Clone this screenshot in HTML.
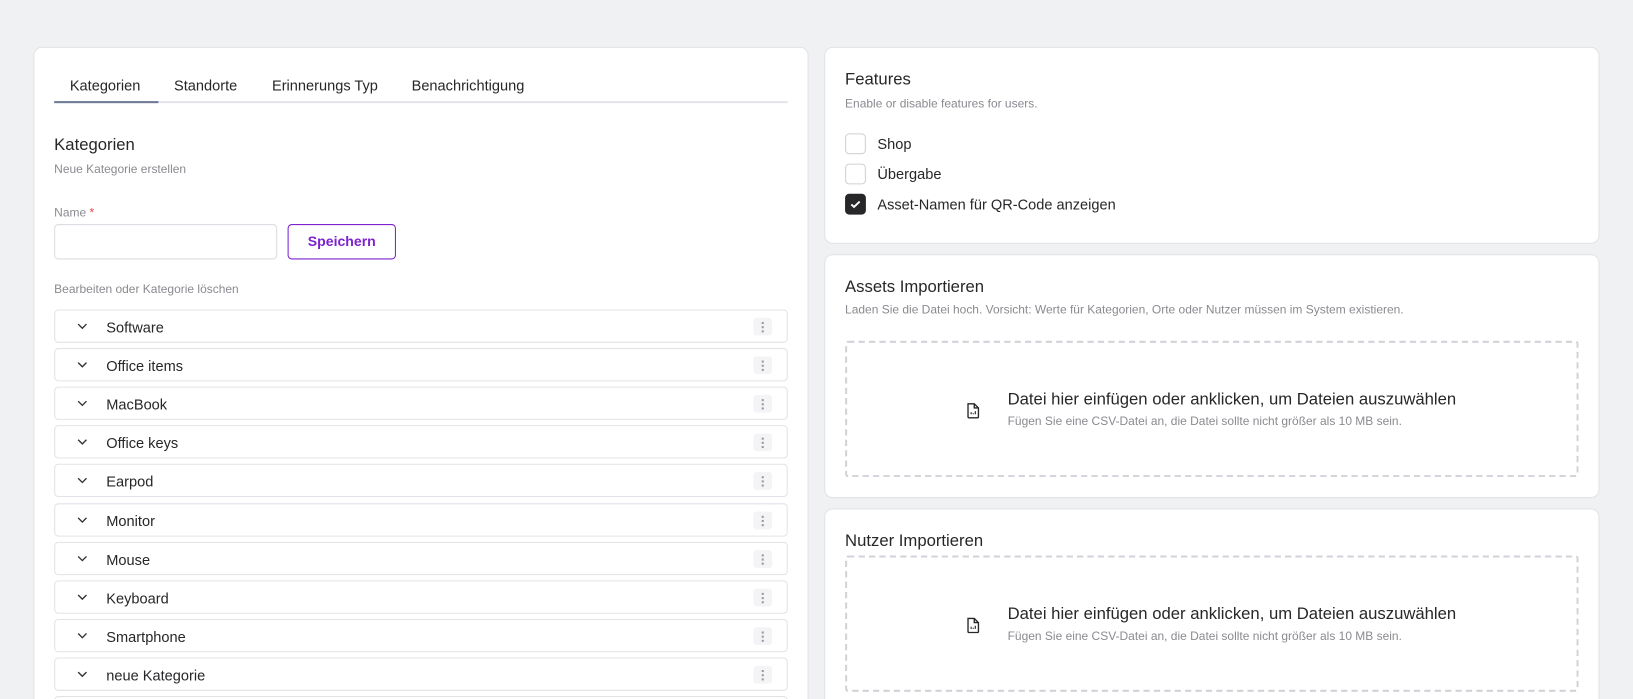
<!DOCTYPE html>
<html><head><meta charset="utf-8"><style>
*{box-sizing:border-box;margin:0;padding:0}
html,body{width:1633px;height:699px;overflow:hidden;background:#f0f1f3}
body{font-family:"Liberation Sans",Arial,sans-serif;color:#27272a;position:relative}
#w{position:absolute;left:0;top:0;width:1633px;height:760px;transform:scale(1.042);transform-origin:0 0}
.card{position:absolute;background:#fff;border:1px solid #e2e3e7;border-radius:8px}
.a{position:absolute;white-space:nowrap}
.tab{position:absolute;top:74px;font-size:14px;color:#27272a}
.row{position:absolute;left:52px;width:704px;height:32px;border:1px solid #e2e3e7;border-radius:4px;background:#fff}
.row .t{position:absolute;left:49px;top:8px;font-size:14px;color:#27272a}
.row svg.c{position:absolute;left:20px;top:11px}
.row .k{position:absolute;right:14px;top:7px;width:18px;height:17px;background:#f4f4f6;border-radius:3px}
.row .k i{position:absolute;left:8px;width:2px;height:2px;background:#9a9aa0}
.cb{position:absolute;left:811px;width:20px;height:20px;border:1px solid #cfd1d6;border-radius:4px;background:#fff}
.lbl{position:absolute;left:842px;font-size:14px;color:#27272a}
.drop{position:absolute;left:811px;width:704px;height:131px;border:2px dashed #d1d3d8;border-radius:3px}
.dt{position:absolute;left:154px;font-size:16px;color:#27272a;white-space:nowrap}
.ds{position:absolute;left:154px;font-size:11.5px;color:#8a8a90;white-space:nowrap}
</style></head><body><div id="w">
<div class="card" style="left:32px;top:45px;width:744px;height:700px"></div>
<div class="tab" style="left:67px">Kategorien</div>
<div class="tab" style="left:167px">Standorte</div>
<div class="tab" style="left:261px">Erinnerungs Typ</div>
<div class="tab" style="left:395px">Benachrichtigung</div>
<div class="a" style="left:52px;top:97px;width:704px;height:2px;background:#e3e5ea"></div>
<div class="a" style="left:52px;top:97px;width:100px;height:2px;background:#6e7b99"></div>
<div class="a" style="left:52px;top:131px;font-size:16px">Kategorien</div>
<div class="a" style="left:52px;top:157px;font-size:11.5px;color:#8a8a90">Neue Kategorie erstellen</div>
<div class="a" style="left:52px;top:199px;font-size:11.5px;color:#8a8a90">Name <span style="color:#ef4444">*</span></div>
<div class="a" style="left:52px;top:215px;width:214px;height:34px;border:1px solid #dcdde2;border-radius:4px"></div>
<div class="a" style="left:276px;top:215px;width:104px;height:34px;border:1px solid #7e22ce;border-radius:4px;color:#7e22ce;font-weight:bold;font-size:13.5px;text-align:center;line-height:32px">Speichern</div>
<div class="a" style="left:52px;top:272px;font-size:11.5px;color:#8a8a90">Bearbeiten oder Kategorie löschen</div>

<div id="rows"></div>
<script>
var n=["Software","Office items","MacBook","Office keys","Earpod","Monitor","Mouse","Keyboard","Smartphone","neue Kategorie",""];
var h="";
for(var i=0;i<n.length;i++){var y=297+i*37.1;
h+='<div class="row" style="top:'+y.toFixed(1)+'px"><svg class="c" width="12" height="8" viewBox="0 0 12 8"><path d="M2 2l4 4 4-4" fill="none" stroke="#333" stroke-width="1.3"/></svg><span class="t">'+n[i]+'</span><span class="k"><i style="top:4px"></i><i style="top:8px"></i><i style="top:12px"></i></span></div>';}
document.getElementById("rows").innerHTML=h;
</script>

<div class="card" style="left:791px;top:45px;width:744px;height:189px"></div>
<div class="a" style="left:811px;top:68px;font-size:16px">Features</div>
<div class="a" style="left:811px;top:94px;font-size:11.5px;color:#8a8a90">Enable or disable features for users.</div>
<div class="cb" style="top:128px"></div><div class="lbl" style="top:130px">Shop</div>
<div class="cb" style="top:157px"></div><div class="lbl" style="top:159px">Übergabe</div>
<div class="cb" style="top:186px;background:#27272a;border-color:#27272a"><svg width="18" height="18" viewBox="0 0 18 18" style="position:absolute;left:0;top:0"><path d="M5 9.2l2.6 2.4L13 6.4" fill="none" stroke="#fff" stroke-width="1.8"/></svg></div><div class="lbl" style="top:188px">Asset-Namen für QR-Code anzeigen</div>

<div class="card" style="left:791px;top:244px;width:744px;height:234px"></div>
<div class="a" style="left:811px;top:267px;font-size:16px">Assets Importieren</div>
<div class="a" style="left:811px;top:292px;font-size:11.5px;color:#8a8a90">Laden Sie die Datei hoch. Vorsicht: Werte für Kategorien, Orte oder Nutzer müssen im System existieren.</div>
<div class="drop" style="top:327px">
<svg width="14" height="16" viewBox="0 0 14 16" style="position:absolute;left:114px;top:57px"><path d="M2 1.5h6l4 4v8.5a1 1 0 0 1-1 1H3a1 1 0 0 1-1-1z M8 1.5v4h4" fill="none" stroke="#27272a" stroke-width="1.3"/><path d="M5 11.5v-2M7 11.5v-1M9 11.5v-3" stroke="#27272a" stroke-width="1.1"/></svg>
<div class="dt" style="top:46px">Datei hier einfügen oder anklicken, um Dateien auszuwählen</div>
<div class="ds" style="top:70px">Fügen Sie eine CSV-Datei an, die Datei sollte nicht größer als 10 MB sein.</div>
</div>

<div class="card" style="left:791px;top:488px;width:744px;height:260px"></div>
<div class="a" style="left:811px;top:511px;font-size:16px">Nutzer Importieren</div>
<div class="drop" style="top:533px">
<svg width="14" height="16" viewBox="0 0 14 16" style="position:absolute;left:114px;top:57px"><path d="M2 1.5h6l4 4v8.5a1 1 0 0 1-1 1H3a1 1 0 0 1-1-1z M8 1.5v4h4" fill="none" stroke="#27272a" stroke-width="1.3"/><path d="M5 11.5v-2M7 11.5v-1M9 11.5v-3" stroke="#27272a" stroke-width="1.1"/></svg>
<div class="dt" style="top:46px">Datei hier einfügen oder anklicken, um Dateien auszuwählen</div>
<div class="ds" style="top:70px">Fügen Sie eine CSV-Datei an, die Datei sollte nicht größer als 10 MB sein.</div>
</div>
</div></body></html>
